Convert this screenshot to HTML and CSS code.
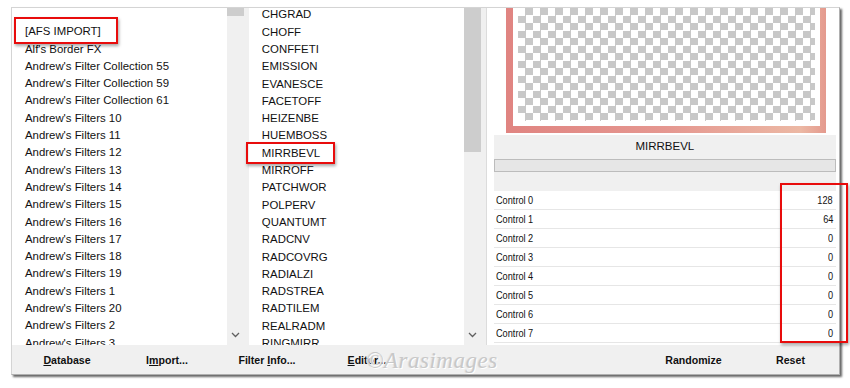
FILE: index.html
```html
<!DOCTYPE html>
<html lang="en">
<head>
    <meta charset="UTF-8">
    <title>Filters Unlimited</title>
    <link rel="stylesheet" href="styles.css">
</head>
<body>
  <div class="window">
    <div class="main">

      <!-- Kategorie -->
      <div class="list">
        <ul class="items first">
          <li>[AFS IMPORT]</li>
          <li>Alf's Border FX</li>
          <li>Andrew's Filter Collection 55</li>
          <li>Andrew's Filter Collection 59</li>
          <li>Andrew's Filter Collection 61</li>
          <li>Andrew's Filters 10</li>
          <li>Andrew's Filters 11</li>
          <li>Andrew's Filters 12</li>
          <li>Andrew's Filters 13</li>
          <li>Andrew's Filters 14</li>
          <li>Andrew's Filters 15</li>
          <li>Andrew's Filters 16</li>
          <li>Andrew's Filters 17</li>
          <li>Andrew's Filters 18</li>
          <li>Andrew's Filters 19</li>
          <li>Andrew's Filters 1</li>
          <li>Andrew's Filters 20</li>
          <li>Andrew's Filters 2</li>
          <li>Andrew's Filters 3</li>
        </ul>
        <div class="scroll">
          <div class="thumb small"></div>
          <svg class="arrow" width="9" height="6" viewBox="0 0 9 6"><polyline points="1,1 4.5,4.5 8,1" fill="none" stroke="#606060" stroke-width="1.3"/></svg>
        </div>
      </div>

      <!-- Filtry -->
      <div class="list second">
        <ul class="items shift">
          <li>CHGRAD</li>
          <li>CHOFF</li>
          <li>CONFFETI</li>
          <li>EMISSION</li>
          <li>EVANESCE</li>
          <li>FACETOFF</li>
          <li>HEIZENBE</li>
          <li>HUEMBOSS</li>
          <li>MIRRBEVL</li>
          <li>MIRROFF</li>
          <li>PATCHWOR</li>
          <li>POLPERV</li>
          <li>QUANTUMT</li>
          <li>RADCNV</li>
          <li>RADCOVRG</li>
          <li>RADIALZI</li>
          <li>RADSTREA</li>
          <li>RADTILEM</li>
          <li>REALRADM</li>
          <li>RINGMIRR</li>
        </ul>
        <div class="scroll">
          <div class="thumb big"></div>
          <svg class="arrow" width="9" height="6" viewBox="0 0 9 6"><polyline points="1,1 4.5,4.5 8,1" fill="none" stroke="#606060" stroke-width="1.3"/></svg>
        </div>
      </div>

      <!-- Podglad i ustawienia -->
      <div class="right">
        <div class="preview">
          <div class="frame">
            <div class="inner">
              <div class="checker"></div>
            </div>
          </div>
        </div>
        <div class="name">MIRRBEVL</div>
        <div class="progress"></div>
        <div class="spacer"></div>
        <div class="controls">
          <div class="row"><span class="lbl">Control 0</span><span class="val">128</span></div>
          <div class="row"><span class="lbl">Control 1</span><span class="val">64</span></div>
          <div class="row"><span class="lbl">Control 2</span><span class="val">0</span></div>
          <div class="row"><span class="lbl">Control 3</span><span class="val">0</span></div>
          <div class="row"><span class="lbl">Control 4</span><span class="val">0</span></div>
          <div class="row"><span class="lbl">Control 5</span><span class="val">0</span></div>
          <div class="row"><span class="lbl">Control 6</span><span class="val">0</span></div>
          <div class="row"><span class="lbl">Control 7</span><span class="val">0</span></div>
        </div>
      </div>
    </div>

    <div class="bar">
      <div class="group">
        <button><u>D</u>atabase</button>
        <button>I<u>m</u>port...</button>
        <button>Filter <u>I</u>nfo...</button>
        <button><u>E</u>ditor...</button>
      </div>
      <div class="group end">
        <button class="wide">Randomize</button>
        <button class="wide">Reset</button>
      </div>
    </div>
  </div>

  <div class="mark">©Arasimages</div>

  <div class="note n1"></div>
  <div class="note n2"></div>
  <div class="note n3"></div>
</body>
</html>
```

FILE: styles.css
```css
* {
    box-sizing: border-box;
    margin: 0;
    padding: 0;
}

body {
    font-family: "Liberation Sans", Arial, sans-serif;
    background-color: #fff;
    color: #111;
    position: relative;
    width: 850px;
    height: 388px;
    overflow: hidden;
}

.window {
    margin: 7px 0 0 11px;
    width: 829px;
    height: 368px;
    border: 1px solid #d4d4d4;
    border-right-color: #b0b0b0;
    border-bottom-color: #b0b0b0;
    background-color: #f0f0f0;
    box-shadow: 2px 2px 2px rgba(0, 0, 0, 0.6);
    display: flex;
    flex-direction: column;
}

.main {
    display: flex;
    height: 337px;
    gap: 5px;
}

.list {
    width: 233px;
    display: flex;
    background-color: #fff;
    overflow: hidden;
}

.items {
    flex: 1;
    list-style: none;
    font-size: 11.4px;
    line-height: 17.3px;
    padding-left: 13px;
    overflow: hidden;
}

.items.first {
    padding-top: 15.3px;
}

.items.shift {
    margin-top: -1.6px;
}

.items li {
    white-space: nowrap;
}

.scroll {
    width: 17px;
    background-color: #f0f0f0;
    display: flex;
    flex-direction: column;
    align-items: center;
    justify-content: space-between;
    padding-bottom: 7px;
}

.thumb {
    width: 17px;
    background-color: #cdcdcd;
}

.thumb.small {
    height: 8px;
}

.thumb.big {
    height: 144px;
}

.right {
    width: 355px;
    background-color: #fff;
    padding: 0 3px 0 7px;
    border-left: 1px solid #dcdcdc;
}

.preview {
    height: 125px;
    padding-left: 12px;
    margin-bottom: 2px;
}

.frame {
    width: 320px;
    height: 125px;
    padding: 0 6px 7px 7px;
    background: linear-gradient(to right, #e08481, #e59790 50%, #ecb8a4 92%, #e49a8e);
}

.inner {
    height: 100%;
    background-color: #fff;
    padding: 0 5px 5px 5px;
}

.checker {
    height: 100%;
    background: repeating-conic-gradient(#c8c8c8 0 25%, #fff 0 50%) 0 0 / 15px 15px;
}

.name {
    height: 24px;
    background-color: #f0f0f0;
    font-size: 11.5px;
    text-align: center;
    line-height: 23px;
}

.progress {
    height: 13px;
    background-color: #e6e6e6;
    border: 1px solid #bcbcbc;
}

.spacer {
    height: 19px;
    background-color: #f0f0f0;
}

.row {
    height: 19px;
    display: flex;
    justify-content: space-between;
    align-items: center;
    padding: 0 3px 1px 2px;
    border-bottom: 1px solid #e6e6e6;
    font-size: 11.2px;
    color: #111;
}

.lbl,
.val {
    display: inline-block;
    transform: scaleX(0.82);
}

.lbl {
    transform-origin: left center;
}

.val {
    transform-origin: right center;
}

.bar {
    flex: 1;
    display: flex;
    justify-content: space-between;
    padding: 1px 0 0 5px;
}

.group {
    display: flex;
}

button {
    width: 100px;
    border: none;
    background: none;
    font-family: "Liberation Sans", Arial, sans-serif;
    font-weight: bold;
    font-size: 10.6px;
    color: #111;
}

button.wide {
    width: 97px;
}

.mark {
    position: absolute;
    left: 366px;
    top: 348px;
    font-family: "Liberation Serif", serif;
    font-style: italic;
    font-size: 23px;
    color: #c8c8c8;
    text-shadow: 1px 1px 0 #fff, -1px 0 0 #e4e4e4;
    letter-spacing: 0.5px;
}

.note {
    position: absolute;
    border: 2px solid #e80c0c;
    box-shadow: 1px 2px 3px rgba(0, 0, 0, 0.35);
}

.n1 {
    left: 14px;
    top: 17px;
    width: 104px;
    height: 27px;
}

.n2 {
    left: 246px;
    top: 142px;
    width: 89px;
    height: 22px;
}

.n3 {
    left: 780px;
    top: 183px;
    width: 68px;
    height: 160px;
}
```
